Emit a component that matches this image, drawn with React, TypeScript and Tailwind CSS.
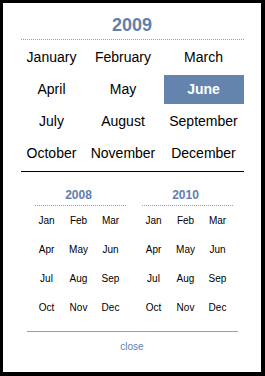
const MONTHS = [
  'January', 'February', 'March',
  'April', 'May', 'June',
  'July', 'August', 'September',
  'October', 'November', 'December',
]

const SHORT = ['Jan', 'Feb', 'Mar', 'Apr', 'May', 'Jun', 'Jul', 'Aug', 'Sep', 'Oct', 'Nov', 'Dec']

function MiniYear({ year }: { year: number }) {
  return (
    <div className="flex w-[96px] flex-col">
      <div className="text-center text-[12px] font-bold leading-[14px] text-[#5f80ac]">{year}</div>
      <div className="ml-[4px] mt-[3px] w-[91px] border-b border-dotted border-[#7fa4cc]" />
      <div className="grid grid-cols-3 auto-rows-[29px]">
        {SHORT.map((m) => (
          <div key={m} className="flex items-center justify-center text-[10px] text-black">
            {m}
          </div>
        ))}
      </div>
    </div>
  )
}

export default function App() {
  return (
    <div
      className="box-border flex h-[376px] w-[265px] flex-col items-center border-t-[3px] border-l-[3px] border-r-[4px] border-b-[4px] border-black bg-white"
      style={{ fontFamily: '"Liberation Sans", Arial, sans-serif' }}
    >
      <div className="mt-[12px] text-[18px] font-bold leading-[20px] text-[#5f80ac]">2009</div>
      <div className="mt-[4px] w-[223px] border-b border-dotted border-[#8fa2b8]" />

      <div className="mt-[3px] grid w-[223px] grid-cols-[62px_81px_80px] auto-rows-[29px] gap-y-[3px]">
        {MONTHS.map((m) =>
          m === 'June' ? (
            <div key={m} className="flex items-center justify-center bg-[#6484ae] text-[14px] font-bold text-white">
              {m}
            </div>
          ) : (
            <div key={m} className="flex items-center justify-center text-[14px] text-black">
              {m}
            </div>
          ),
        )}
      </div>
      <div className="mt-[3px] w-[223px] border-b border-black" />

      <div className="mt-[16px] flex gap-[11px]">
        <MiniYear year={2008} />
        <MiniYear year={2010} />
      </div>

      <div className="mt-[9px] w-[211px] border-b border-[#8ea4bb]" />
      <div className="mt-[9px] text-[10px] leading-[12px] text-[#5f80ac]">close</div>
    </div>
  )
}
